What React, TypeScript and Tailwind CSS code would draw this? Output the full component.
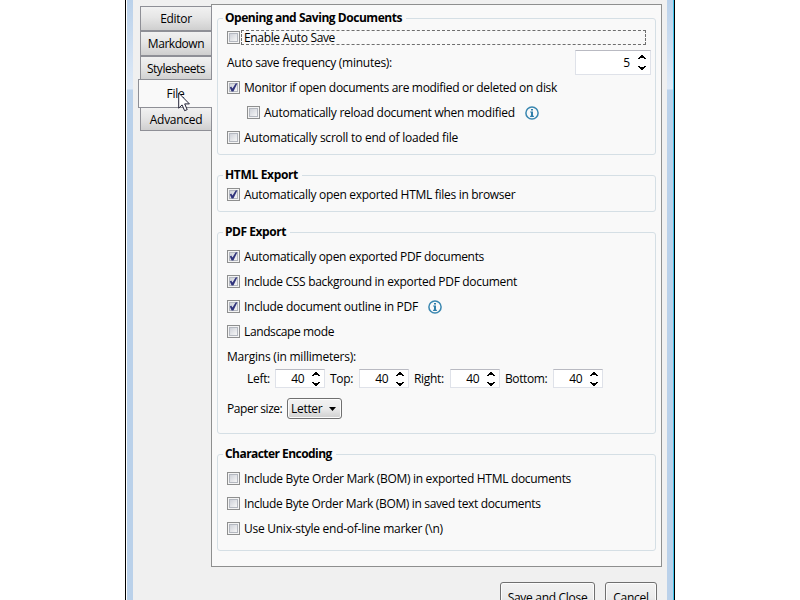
import type { ReactNode } from "react";

function Box({ checked }: { checked?: boolean }) {
  return (
    <span className="grid h-[13px] w-[13px] shrink-0 place-items-center border border-[#8e8f8f] bg-[#f4f4f4]">
      <span className="grid h-[9px] w-[9px] border border-[#b4b8c0] bg-linear-to-br from-[#cfd2d9] to-[#f6f6f6]">
        {checked && (
          <svg className="-m-px h-[9px] w-[9px] shrink-0" viewBox="0 0 9 9">
            <path d="M0.8 4.4 2.2 3.6 3.5 5.6 6.6 0.6 8.4 0.2 4.4 8.4 2.6 8.4Z" fill="#31347c" />
          </svg>
        )}
      </span>
    </span>
  );
}

function Check({ label, tracking, checked, indent, info }: { label: string; tracking: string; checked?: boolean; indent?: boolean; info?: boolean }) {
  return (
    <div className={`flex h-[25px] items-center ${indent ? "pl-[29px]" : "pl-[9px]"}`}>
      <Box checked={checked} />
      <span className={`ml-[4px] ${tracking}`}>{label}</span>
      {info && <Info />}
    </div>
  );
}

function Info() {
  return (
    <svg className="mt-px ml-[10px] h-[14px] w-[14px] shrink-0" viewBox="0 0 14 14" fill="none">
      <circle cx="7" cy="7" r="6.1" stroke="#3a87b0" strokeWidth="1.5" />
      <path d="M6 3h2v1.6H6zM5.1 5.6H8v4.2h.9v1.1H5.1V9.8H6V6.6h-.9z" fill="#2f7eaa" />
    </svg>
  );
}

function Spinner({ value, big }: { value: number; big?: boolean }) {
  return (
    <span className={`flex shrink-0 items-center justify-end border border-[#dfe2e9] border-t-[#b9bac2] bg-white pr-[4px] ${big ? "h-[25px] w-[76px]" : "h-[19px] w-[50px]"}`}>
      <span className={big ? "mr-[8px]" : "mr-[8px] tracking-[-0.5px]"}>{value}</span>
      <svg className="h-[15px] w-[8px]" viewBox="0 0 8 15" shapeRendering="crispEdges">
        <path
          d={big ? "M3 0h2v1h1v1h1v1h1v1H6V3H2v1H0V3h1V2h1V1h1zM0 11h2v1h4v-1h2v1H7v1H6v1H5v1H3v-1H2v-1H1v-1H0z" : "M3 1h2v1h1v1h1v1h1v1H6V4H2v1H0V4h1V3h1V2h1zM0 11h2v1h4v-1h2v1H7v1H6v1H5v1H3v-1H2v-1H1v-1H0z"}
          fill="#000"
        />
      </svg>
    </span>
  );
}

function Group({ title, tracking, size, children }: { title: string; tracking: string; size: string; children: ReactNode }) {
  return (
    <fieldset className={`w-[439px] rounded-[3px] border border-[#d5dfe5] ${size}`}>
      <legend className={`ml-[5px] h-[16px] pr-[4px] pl-[2px] leading-[16px] font-bold whitespace-nowrap ${tracking}`}>{title}</legend>
      {children}
    </fieldset>
  );
}

function Tab({ label, size }: { label: string; size: string }) {
  return (
    <div className={`ml-[2px] flex items-center justify-center border border-[#8e8f96] bg-linear-to-b from-[#f1f1f1] via-[#e6e6e6] via-45% to-[#cfcfcf] ${size}`}>
      {label}
    </div>
  );
}

function Edge() {
  return <div className="w-[6px] bg-linear-to-b from-[#bad1ea] from-0% via-[#dfeaf7] via-[89px] to-[#bad1ea] to-[90px]" />;
}

const push =
  "flex h-[31px] items-center justify-center rounded-[3px] border border-[#707070] bg-linear-to-b from-[#f2f2f2] via-[#ebebeb] via-50% to-[#cfcfcf] shadow-[inset_0_0_0_1px_#fcfcfc]";

export default function App() {
  return (
    <div className="flex h-[600px] w-[800px] overflow-hidden bg-white pl-[125px] font-['Open_Sans','Noto_Sans',sans-serif] text-[12px] leading-[17px] whitespace-nowrap text-black">
      <div className="mr-px w-px bg-black" />
      <Edge />
      <main className="h-[600px] w-[534px] bg-[#f0f0f0]">
        <div className="flex pt-[4px] pl-[5px]">
          <nav className="relative z-10 -mr-px w-[74px] pt-[2px]">
            <Tab label="Editor" size="h-[25px] tracking-[-0.3px]" />
            <Tab label="Markdown" size="h-[25px] tracking-[-0.45px]" />
            <Tab label="Stylesheets" size="h-[25px] tracking-[-0.45px]" />
            <div className="relative -mt-[2px] flex h-[29px] items-center justify-center border border-r-0 border-[#8e8f96] bg-[#f9f9f9] tracking-[-0.3px]">File</div>
            <Tab label="Advanced" size="-mt-px h-[24px] tracking-[-0.3px]" />
            <svg className="absolute top-[88px] left-[40px] h-[20px] w-[13px]" viewBox="0 0 13 20">
              <path d="M.7 1v15.2l3.4-3.3 2.5 5.8 2.6-1.1-2.5-5.7h4.7z" fill="#fff" stroke="#222236" />
            </svg>
          </nav>
          <section className="h-[563px] w-[451px] border border-[#8e8f8f] bg-[#f9f9f9] pt-[5px] pl-[5px]">
            <Group title="Opening and Saving Documents" tracking="tracking-[-0.459px]" size="h-[145px]">
              <div className="-mt-px flex h-[25px] items-center pl-[9px]">
                <Box />
                <span className="ml-px flex h-[15px] w-[405px] items-center border border-dashed border-[#6e6e6e] pl-[2px] tracking-[-0.341px]">Enable Auto Save</span>
              </div>
              <div className="flex h-[25px] items-center justify-between pr-[4px] pl-[9px]">
                <span className="tracking-[-0.266px]">Auto save frequency (minutes):</span>
                <Spinner value={5} big />
              </div>
              <Check checked label="Monitor if open documents are modified or deleted on disk" tracking="tracking-[-0.314px]" />
              <Check indent info label="Automatically reload document when modified" tracking="tracking-[-0.265px]" />
              <Check label="Automatically scroll to end of loaded file" tracking="tracking-[-0.232px]" />
            </Group>
            <Group title="HTML Export" tracking="tracking-[-0.335px]" size="mt-[12px] h-[45px]">
              <div className="-mt-px">
                <Check checked label="Automatically open exported HTML files in browser" tracking="tracking-[-0.295px]" />
              </div>
            </Group>
            <Group title="PDF Export" tracking="tracking-[-0.446px]" size="mt-[12px] h-[210px]">
              <div className="pt-[4px]">
                <Check checked label="Automatically open exported PDF documents" tracking="tracking-[-0.316px]" />
                <Check checked label="Include CSS background in exported PDF document" tracking="tracking-[-0.311px]" />
                <Check checked info label="Include document outline in PDF" tracking="tracking-[-0.262px]" />
                <Check label="Landscape mode" tracking="tracking-[-0.384px]" />
                <div className="flex h-[25px] items-center pl-[9px] tracking-[-0.222px]">Margins (in millimeters):</div>
                <div className="flex h-[19px] items-center pl-[29px] tracking-[-0.3px]">
                  <span className="w-[28px]">Left:</span>
                  <Spinner value={40} />
                  <span className="ml-[5px] w-[29px]">Top:</span>
                  <Spinner value={40} />
                  <span className="ml-[5px] w-[36px]">Right:</span>
                  <Spinner value={40} />
                  <span className="ml-[5px] w-[48px] tracking-[-0.4px]">Bottom:</span>
                  <Spinner value={40} />
                </div>
                <div className="mt-[10px] flex h-[21px] items-center pl-[9px]">
                  <span className="w-[60px] tracking-[-0.45px]">Paper size:</span>
                  <span className="flex h-[21px] w-[55px] items-center justify-between rounded-[3px] border border-[#707070] bg-linear-to-b from-[#f2f2f2] via-[#ebebeb] via-50% to-[#cfcfcf] pr-[5px] pl-[3px] tracking-[-0.3px] shadow-[inset_0_0_0_1px_#fcfcfc]">
                    Letter
                    <svg className="h-[4px] w-[7px]" viewBox="0 0 7 4">
                      <path d="M0 0h7L3.5 4z" fill="#000" />
                    </svg>
                  </span>
                </div>
              </div>
            </Group>
            <Group title="Character Encoding" tracking="tracking-[-0.55px]" size="mt-[12px] h-[105px]">
              <div className="pt-[4px]">
                <Check label="Include Byte Order Mark (BOM) in exported HTML documents" tracking="tracking-[-0.305px]" />
                <Check label="Include Byte Order Mark (BOM) in saved text documents" tracking="tracking-[-0.345px]" />
                <Check label={"Use Unix-style end-of-line marker (\\n)"} tracking="tracking-[-0.26px]" />
              </div>
            </Group>
          </section>
        </div>
        <div className="flex justify-end gap-[10px] pt-[15px] pr-[10px] tracking-[-0.3px]">
          <button className={`w-[95px] ${push}`}>Save and Close</button>
          <button className={`w-[52px] ${push}`}>Cancel</button>
        </div>
      </main>
      <Edge />
      <div className="w-px bg-[#3fc4ea]" />
      <div className="w-px bg-black" />
    </div>
  );
}
